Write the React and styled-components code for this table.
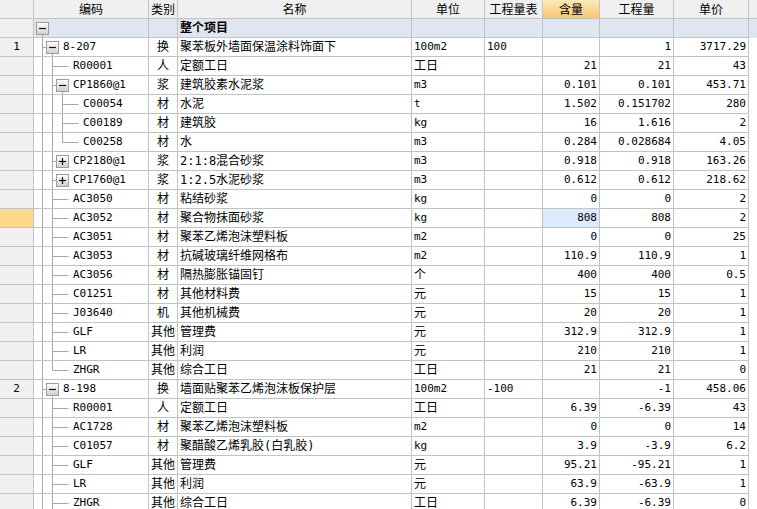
import React from 'react';
import styled, { createGlobalStyle, css } from 'styled-components';

const GlobalStyle = createGlobalStyle`
  html, body {
    margin: 0;
    padding: 0;
    background: #ffffff;
  }
  body {
    font-family: "DejaVu Sans Mono", "Noto Sans CJK SC", monospace;
    font-size: 12px;
    color: #000;
  }
`;

const COLS = '34px 115px 29px 234px 73px 58px 57px 74px 75px 1fr';
const LINE = '#c3c3c3';
const TREE = '#a8a8a8';

const Sheet = styled.div`
  width: 757px;
  height: 509px;
  overflow: hidden;
  background: #fff;
`;

const HeaderRow = styled.div`
  display: grid;
  grid-template-columns: ${COLS};
  height: 19px;
  background: #f0f0f0;
`;

const HeadCell = styled.div`
  box-sizing: border-box;
  height: 19px;
  line-height: 18px;
  border-right: ${({ $last }) => ($last ? 'none' : `1px solid ${LINE}`)};
  border-bottom: 1px solid ${LINE};
  text-align: center;
  font-family: "Noto Sans CJK SC", sans-serif;
  font-size: 12px;
  white-space: nowrap;
  overflow: hidden;
  ${({ $active }) =>
    $active &&
    css`
      background: linear-gradient(#fde9bb, #f6c76f);
    `}
`;

const BodyRow = styled.div`
  display: grid;
  grid-template-columns: ${COLS};
  height: 19px;
  background: ${({ $group }) => ($group ? '#dfe6ef' : '#fff')};
`;

const baseCell = css`
  box-sizing: border-box;
  height: 19px;
  line-height: 18px;
  border-right: 1px solid ${LINE};
  border-bottom: 1px solid ${LINE};
  white-space: nowrap;
  overflow: hidden;
`;

const RowNum = styled.div`
  ${baseCell};
  background: ${({ $selected }) => ($selected ? '#ffd88e' : '#f0f0f0')};
  text-align: center;
  font-size: 11px;
`;

const CodeCell = styled.div`
  ${baseCell};
  display: flex;
  align-items: flex-start;
  font-size: 11px;
`;

const Cell = styled.div`
  ${baseCell};
  padding: 0 2px;
  text-align: ${({ $align }) => $align || 'left'};
  font-size: ${({ $ascii }) => ($ascii ? '11px' : '12px')};
  font-weight: ${({ $bold }) => ($bold ? 700 : 400)};
  background: ${({ $focus }) => ($focus ? '#dcebfc' : 'transparent')};
`;

const Filler = styled.div`
  height: 19px;
`;

const TreeSvg = styled.svg`
  flex: none;
  display: block;
`;

const tree = {
  code: '', name: '整个项目', open: true, more: true, group: true,
  children: [
    {
      no: '1', code: '8-207', type: '换', name: '聚苯板外墙面保温涂料饰面下', unit: '100m2', qty: '100', amount: '', work: '1', price: '3717.29', open: true,
      children: [
        { code: 'R00001', type: '人', name: '定额工日', unit: '工日', amount: '21', work: '21', price: '43' },
        {
          code: 'CP1860@1', type: '浆', name: '建筑胶素水泥浆', unit: 'm3', amount: '0.101', work: '0.101', price: '453.71', open: true,
          children: [
            { code: 'C00054', type: '材', name: '水泥', unit: 't', amount: '1.502', work: '0.151702', price: '280' },
            { code: 'C00189', type: '材', name: '建筑胶', unit: 'kg', amount: '16', work: '1.616', price: '2' },
            { code: 'C00258', type: '材', name: '水', unit: 'm3', amount: '0.284', work: '0.028684', price: '4.05' },
          ],
        },
        { code: 'CP2180@1', type: '浆', name: '2:1:8混合砂浆', unit: 'm3', amount: '0.918', work: '0.918', price: '163.26', closed: true },
        { code: 'CP1760@1', type: '浆', name: '1:2.5水泥砂浆', unit: 'm3', amount: '0.612', work: '0.612', price: '218.62', closed: true },
        { code: 'AC3050', type: '材', name: '粘结砂浆', unit: 'kg', amount: '0', work: '0', price: '2' },
        { code: 'AC3052', type: '材', name: '聚合物抹面砂浆', unit: 'kg', amount: '808', work: '808', price: '2', selected: true },
        { code: 'AC3051', type: '材', name: '聚苯乙烯泡沫塑料板', unit: 'm2', amount: '0', work: '0', price: '25' },
        { code: 'AC3053', type: '材', name: '抗碱玻璃纤维网格布', unit: 'm2', amount: '110.9', work: '110.9', price: '1' },
        { code: 'AC3056', type: '材', name: '隔热膨胀锚固钉', unit: '个', amount: '400', work: '400', price: '0.5' },
        { code: 'C01251', type: '材', name: '其他材料费', unit: '元', amount: '15', work: '15', price: '1' },
        { code: 'J03640', type: '机', name: '其他机械费', unit: '元', amount: '20', work: '20', price: '1' },
        { code: 'GLF', type: '其他', name: '管理费', unit: '元', amount: '312.9', work: '312.9', price: '1' },
        { code: 'LR', type: '其他', name: '利润', unit: '元', amount: '210', work: '210', price: '1' },
        { code: 'ZHGR', type: '其他', name: '综合工日', unit: '工日', amount: '21', work: '21', price: '0' },
      ],
    },
    {
      no: '2', code: '8-198', type: '换', name: '墙面贴聚苯乙烯泡沫板保护层', unit: '100m2', qty: '-100', amount: '', work: '-1', price: '458.06', open: true, more: true,
      children: [
        { code: 'R00001', type: '人', name: '定额工日', unit: '工日', amount: '6.39', work: '-6.39', price: '43' },
        { code: 'AC1728', type: '材', name: '聚苯乙烯泡沫塑料板', unit: 'm2', amount: '0', work: '0', price: '14' },
        { code: 'C01057', type: '材', name: '聚醋酸乙烯乳胶(白乳胶)', unit: 'kg', amount: '3.9', work: '-3.9', price: '6.2' },
        { code: 'GLF', type: '其他', name: '管理费', unit: '元', amount: '95.21', work: '-95.21', price: '1' },
        { code: 'LR', type: '其他', name: '利润', unit: '元', amount: '63.9', work: '-63.9', price: '1' },
        { code: 'ZHGR', type: '其他', name: '综合工日', unit: '工日', amount: '6.39', work: '-6.39', price: '0' },
      ],
    },
  ],
};

function flatten(node, level, guides, last, out) {
  out.push({ ...node, level, guides, last });
  if (node.open && node.children) {
    node.children.forEach((child, i) => {
      const childLast = i === node.children.length - 1 && !node.more;
      const childGuides = level === 0 ? [] : [...guides, !last];
      flatten(child, level + 1, childGuides, childLast, out);
    });
  }
}

const rows = [];
flatten(tree, 0, [], true, rows);

const cx = (lvl) => 8.5 + 10 * lvl;

const TreeLines = ({ row }) => {
  const { level, guides, last, open, closed } = row;
  const hasBox = open || closed;
  const width = level === 0 ? 20 : 19 + 10 * level;
  const x = cx(level);
  return (
    <TreeSvg width={width} height={18} viewBox={`0 0 ${width} 18`}>
      <defs>
        <linearGradient id="boxFill" x1="0" y1="0" x2="0" y2="1">
          <stop offset="0" stopColor="#ffffff" />
          <stop offset="1" stopColor="#cfcfcf" />
        </linearGradient>
      </defs>
      {guides.map((on, a) =>
        on ? <line key={a} x1={cx(a)} y1={0} x2={cx(a)} y2={18} stroke={TREE} /> : null
      )}
      {level > 0 && (
        <>
          <line x1={cx(level - 1)} y1={0} x2={cx(level - 1)} y2={last ? 9.5 : 18} stroke={TREE} />
          <line x1={cx(level - 1)} y1={9.5} x2={hasBox ? x - 6 : x + 6} y2={9.5} stroke={TREE} />
        </>
      )}
      {open && <line x1={x} y1={15.5} x2={x} y2={18} stroke={TREE} />}
      {hasBox && (
        <>
          <rect x={x - 6} y={3.5} width={12} height={12} fill="url(#boxFill)" stroke="#9c9c9c" />
          <line x1={x - 3.5} y1={9.5} x2={x + 3.5} y2={9.5} stroke="#111" strokeWidth={1.2} />
          {closed && <line x1={x} y1={6} x2={x} y2={13} stroke="#111" strokeWidth={1.2} />}
        </>
      )}
    </TreeSvg>
  );
};

const isAscii = (s) => /^[\x00-\x7f]*$/.test(s || '');

const headers = ['', '编码', '类别', '名称', '单位', '工程量表', '含量', '工程量', '单价'];

export default function App() {
  return (
    <Sheet>
      <GlobalStyle />
      <HeaderRow>
        {headers.map((h, i) => (
          <HeadCell key={i} $active={h === '含量'}>
            {h}
          </HeadCell>
        ))}
        <HeadCell $last />
      </HeaderRow>
      {rows.map((r, i) => (
        <BodyRow key={i} $group={r.group}>
          <RowNum $selected={r.selected}>{r.no}</RowNum>
          <CodeCell>
            <TreeLines row={r} />
            <span>{r.code}</span>
          </CodeCell>
          <Cell $align="center">{r.type}</Cell>
          <Cell $bold={r.group} $ascii={isAscii(r.name) && !r.group}>{r.name}</Cell>
          <Cell $ascii={isAscii(r.unit)}>{r.unit}</Cell>
          <Cell $ascii>{r.qty}</Cell>
          <Cell $ascii $align="right" $focus={r.selected}>{r.amount}</Cell>
          <Cell $ascii $align="right">{r.work}</Cell>
          <Cell $ascii $align="right">{r.price}</Cell>
          <Filler />
        </BodyRow>
      ))}
    </Sheet>
  );
}
